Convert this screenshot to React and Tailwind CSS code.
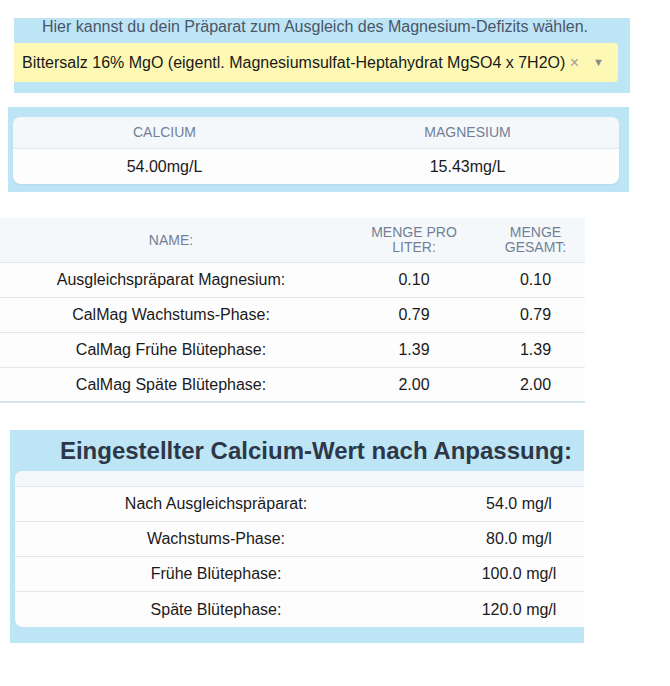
import React from 'react';

const phases = [
  { name: 'Ausgleichspräparat Magnesium:', perLiter: '0.10', total: '0.10' },
  { name: 'CalMag Wachstums-Phase:', perLiter: '0.79', total: '0.79' },
  { name: 'CalMag Frühe Blütephase:', perLiter: '1.39', total: '1.39' },
  { name: 'CalMag Späte Blütephase:', perLiter: '2.00', total: '2.00' },
];

const calcium = [
  { label: 'Nach Ausgleichspräparat:', value: '54.0 mg/l' },
  { label: 'Wachstums-Phase:', value: '80.0 mg/l' },
  { label: 'Frühe Blütephase:', value: '100.0 mg/l' },
  { label: 'Späte Blütephase:', value: '120.0 mg/l' },
];

const App = () => {
  return (
    <div className="bg-white min-h-[686px] w-[670px] font-['Liberation_Sans',Arial,sans-serif] text-[#1a1a1a]">
      <div className="h-[18px]" />

      {/* Präparat-Auswahl */}
      <div className="ml-[14px] w-[616px] bg-[#bee5f5] pb-[11px]">
        <p className="h-[25px] pl-[28px] text-[16px] leading-[18px] text-[#4a5568]">
          Hier kannst du dein Präparat zum Ausgleich des Magnesium-Defizits wählen.
        </p>
        <div className="flex h-[39px] w-[604px] items-center rounded-r-[4px] bg-[#fdf9b4] pl-[8px] pr-[14px] text-[16px]">
          <span className="flex-1 whitespace-nowrap">
            Bittersalz 16% MgO (eigentl. Magnesiumsulfat-Heptahydrat MgSO4 x 7H2O)
          </span>
          <span className="ml-[4px] text-[16px] text-[#a0a0a0]">×</span>
          <span className="ml-[14px] text-[11px] text-[#8a8a8a]">▼</span>
        </div>
      </div>

      {/* Ausgangswerte */}
      <div className="mt-[14px] ml-[8px] w-[621px] bg-[#bee5f5] pt-[10px] pb-[8px] pl-[5px]">
        <div className="w-[606px] overflow-hidden rounded-[8px] bg-[#fdfdfe] shadow-[0_1px_2px_rgba(0,0,0,0.06)]">
          <div className="grid h-[32px] grid-cols-2 items-center border-b border-[#e2e8f0] bg-[#f5f8fb] text-[14px] uppercase text-[#718096]">
            <div className="text-center">Calcium</div>
            <div className="text-center">Magnesium</div>
          </div>
          <div className="grid h-[35px] grid-cols-2 items-center text-[16px]">
            <div className="text-center">54.00mg/L</div>
            <div className="text-center">15.43mg/L</div>
          </div>
        </div>
      </div>

      {/* Mengen */}
      <div className="mt-[26px] w-[585px]">
        <div className="grid h-[45px] grid-cols-[342px_144px_99px] items-center border-b border-[#e2e8f0] bg-[#f5f8fb] text-[14px] uppercase leading-[15px] text-[#718096]">
          <div className="text-center">Name:</div>
          <div className="text-center">Menge pro<br />Liter:</div>
          <div className="text-center">Menge<br />gesamt:</div>
        </div>
        {phases.map((row, i) => (
          <div
            key={row.name}
            className={`grid h-[35px] grid-cols-[342px_144px_99px] items-center bg-[#fdfdfe] text-[16px] ${
              i === phases.length - 1 ? 'border-b-2 border-[#d3e4ea]' : 'border-b border-[#e2e8f0]'
            }`}
          >
            <div className="text-center">{row.name}</div>
            <div className="text-center">{row.perLiter}</div>
            <div className="text-center">{row.total}</div>
          </div>
        ))}
      </div>

      {/* Calcium nach Anpassung */}
      <div className="mt-[27px] ml-[10px] w-[574px] overflow-hidden bg-[#bee5f5] pb-[16px]">
        <h2 className="flex h-[41px] items-center justify-end pr-[12px] text-[24px] font-bold text-[#2d3748]">
          Eingestellter Calcium-Wert nach Anpassung:
        </h2>
        <div className="ml-[5px] w-[606px] overflow-hidden rounded-[8px] bg-[#fdfdfe]">
          <div className="h-[16px] border-b border-[#e2e8f0] bg-[#f5f8fb]" />
          {calcium.map((row, i) => (
            <div
              key={row.label}
              className={`grid h-[35px] grid-cols-[402px_204px] items-center text-[16px] ${
                i === calcium.length - 1 ? '' : 'border-b border-[#e2e8f0]'
              }`}
            >
              <div className="text-center">{row.label}</div>
              <div className="text-center">{row.value}</div>
            </div>
          ))}
        </div>
      </div>
    </div>
  );
};

export default App;
